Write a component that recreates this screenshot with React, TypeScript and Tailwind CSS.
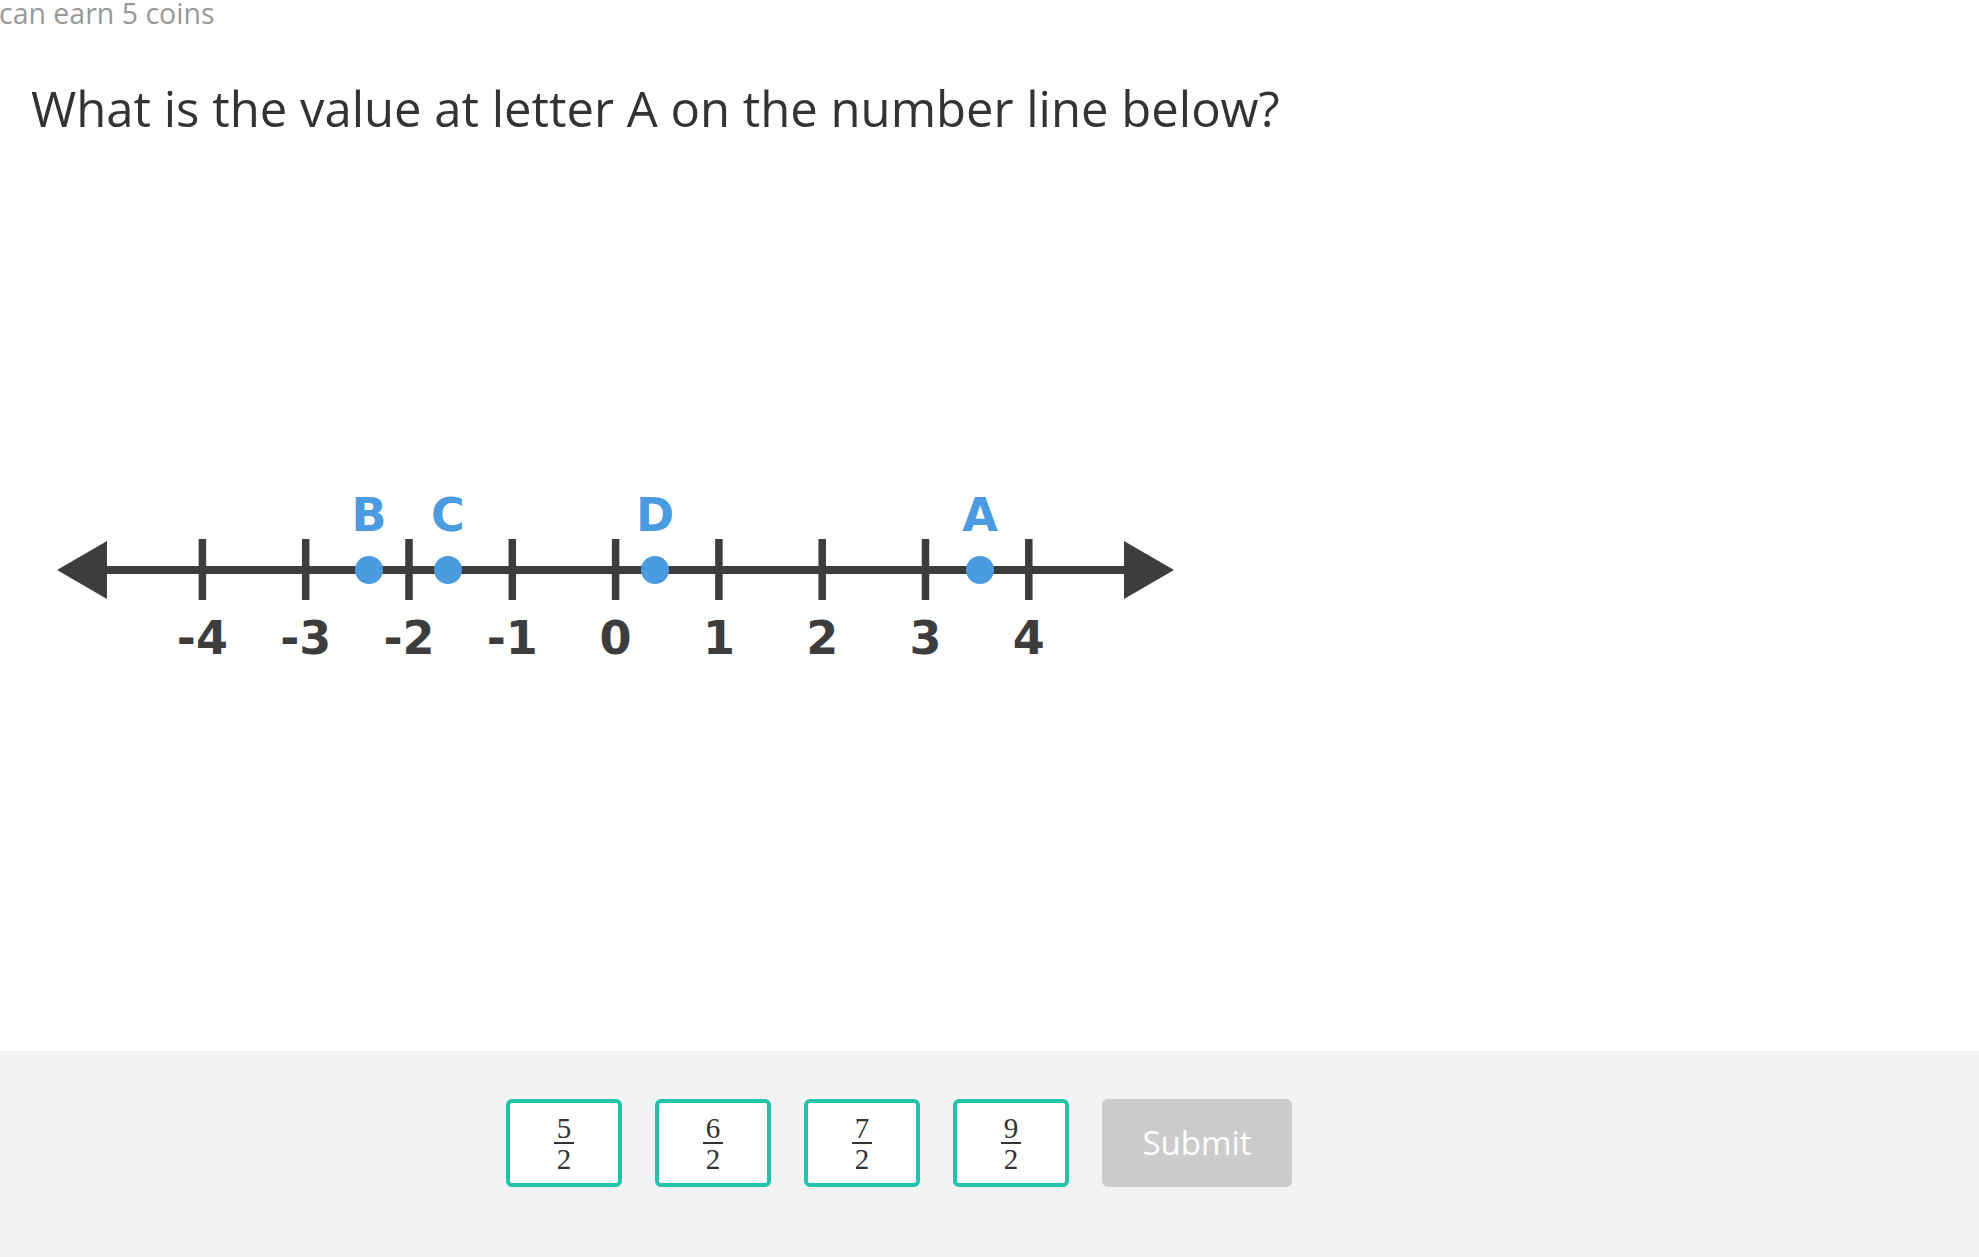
import React from "react";

const ticks = [-4, -3, -2, -1, 0, 1, 2, 3, 4];
const tickX = (v: number) => 615.6 + v * 103.3;
const points = [
  { l: "B", x: 369 },
  { l: "C", x: 448 },
  { l: "D", x: 655 },
  { l: "A", x: 980 },
];

function Fraction({ n }: { n: number }) {
  return (
    <div className="flex flex-col items-center text-[#333] leading-none" style={{ fontFamily: '"Liberation Serif", serif' }}>
      <span className="text-[29px] leading-[24px]">{n}</span>
      <span className="w-[20px] h-[2px] bg-[#333] mt-[2px] mb-[3px]" />
      <span className="text-[29px] leading-[24px]">2</span>
    </div>
  );
}

export default function App() {
  return (
    <div className="w-[1979px] h-[1257px] flex flex-col bg-white overflow-hidden" style={{ fontFamily: '"Open Sans", sans-serif' }}>
      <div className="h-[1051px] flex flex-col">
        <div className="text-[28.5px] leading-[34px] text-[#999] -mt-[4px] -ml-[1px] whitespace-nowrap">can earn 5 coins</div>
        <div className="mt-[45px] ml-[31px] text-[49px] leading-[66px] text-[#333] whitespace-nowrap">
          What is the value at letter A on the number line below?
        </div>
        <svg width="1200" height="200" className="mt-[339px] block" viewBox="0 0 1200 200">
          <line x1="100" y1="90" x2="1130" y2="90" stroke="#3d3d3d" strokeWidth="8" />
          <polygon points="57,90 107,61 107,119" fill="#3d3d3d" />
          <polygon points="1174,90 1124,61 1124,119" fill="#3d3d3d" />
          {ticks.map((t) => (
            <line key={t} x1={tickX(t)} y1="59" x2={tickX(t)} y2="120" stroke="#3d3d3d" strokeWidth="7.5" />
          ))}
          {points.map((p) => (
            <g key={p.l}>
              <circle cx={p.x} cy="90" r="14" fill="#4a9be0" />
              <text x={p.x} y="51" textAnchor="middle" fill="#4a9be0" fontSize="46" fontWeight="700" fontFamily="'DejaVu Sans', sans-serif">
                {p.l}
              </text>
            </g>
          ))}
          {ticks.map((t) => (
            <text key={"n" + t} x={tickX(t)} y="174" textAnchor="middle" fill="#3d3d3d" fontSize="46" fontWeight="700" fontFamily="'DejaVu Sans', sans-serif">
              {t < 0 ? "-" + Math.abs(t) : String(t)}
            </text>
          ))}
        </svg>
      </div>
      <div className="flex-1 bg-[#f3f3f3] pt-[48px]">
        <div className="flex gap-[33px] ml-[506px]">
          {[5, 6, 7, 9].map((n) => (
            <button key={n} className="w-[116px] h-[88px] border-[4px] border-[#22c3ae] rounded-[6px] bg-white flex items-center justify-center">
              <Fraction n={n} />
            </button>
          ))}
          <button className="w-[190px] h-[88px] rounded-[6px] bg-[#cccccc] text-white text-[33px] font-normal flex items-center justify-center">
            Submit
          </button>
        </div>
      </div>
    </div>
  );
}
